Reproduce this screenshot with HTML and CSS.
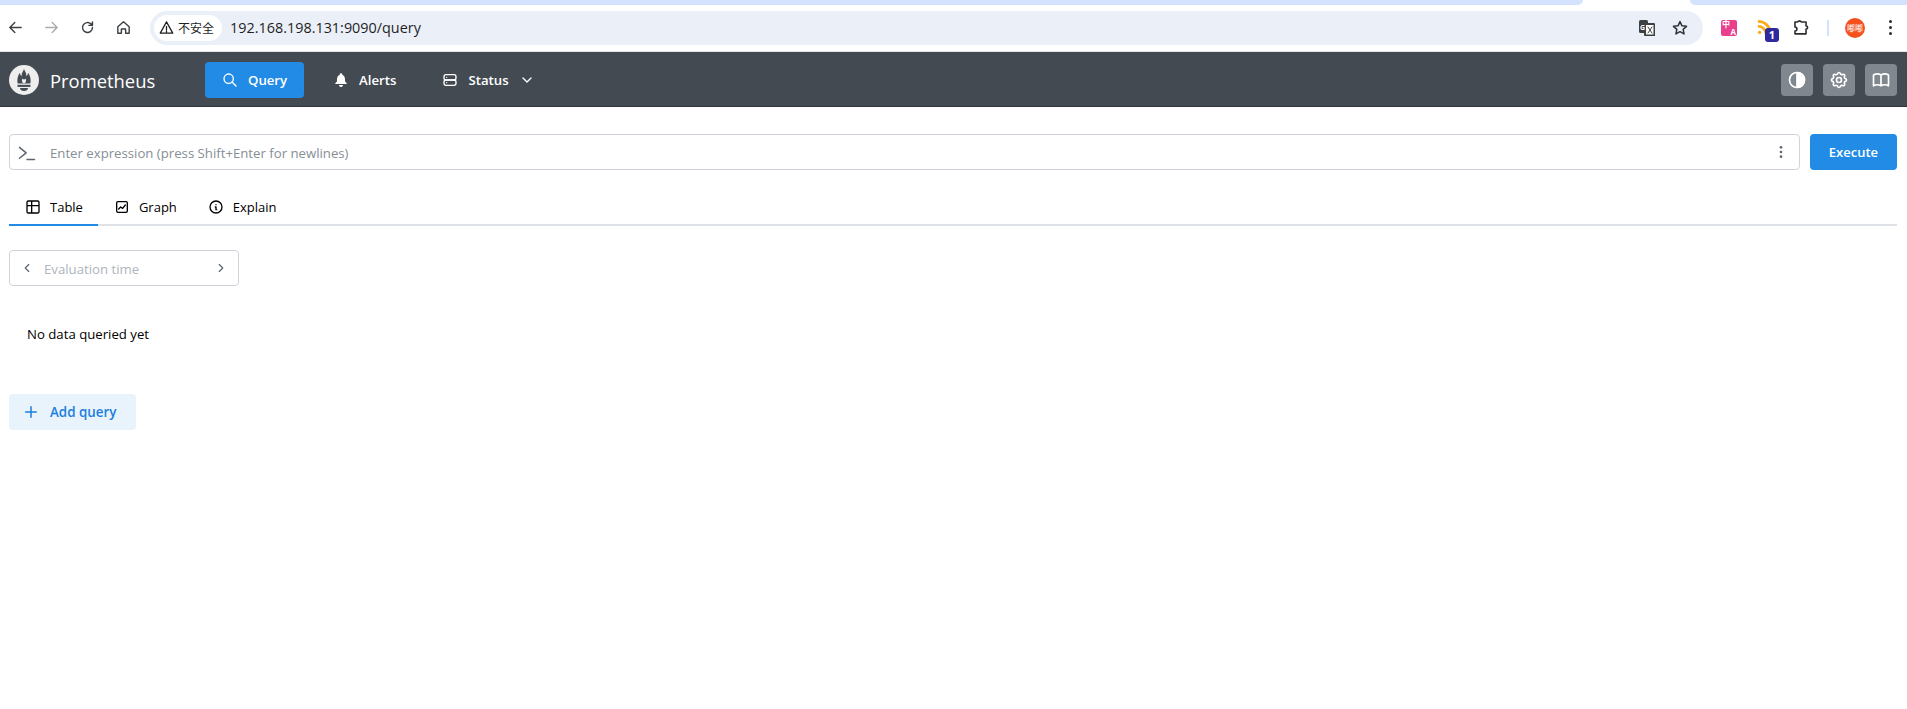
FILE: index.html
```html
<!DOCTYPE html>
<html lang="en">
<head>
    <meta charset="UTF-8">
    <meta name="viewport" content="width=device-width, initial-scale=1.0">
    <title>Prometheus Time Series Collection and Processing Server</title>
    <link rel="stylesheet" href="styles.css">
</head>
<body>
    <!-- browser chrome -->
    <div class="tab-strip">
        <div class="tab-strip-left"></div>
        <div class="tab-strip-gap"></div>
        <div class="tab-strip-right"></div>
    </div>
    <div class="toolbar">
        <div class="nav-buttons">
            <svg class="nav-icon" viewBox="0 0 24 24"><path d="M20 12H5M11 5l-7 7 7 7"/></svg>
            <svg class="nav-icon nav-disabled" viewBox="0 0 24 24"><path d="M4 12h15M13 5l7 7-7 7"/></svg>
            <svg class="nav-icon" viewBox="0 0 24 24"><path d="M19 12a7 7 0 1 1-2.2-5.1L19 9M19 4v5h-5"/></svg>
            <svg class="nav-icon" viewBox="0 0 24 24"><path d="M4 11l8-7 8 7v9h-5v-6H9v6H4z"/></svg>
        </div>
        <div class="address-bar">
            <div class="security-chip">
                <svg class="warn-icon" viewBox="0 0 24 24"><path d="M12 3L2 21h20zM12 10v6M12 17.5v1.5"/></svg>
                <span>不安全</span>
            </div>
            <span class="url">192.168.198.131:9090/query</span>
            <svg class="translate-icon" viewBox="0 0 16 16">
                <rect x="0" y="0" width="9" height="13" rx="1.5" fill="#3c4043"/>
                <rect x="6" y="4" width="9.500" height="11.500" rx="1" fill="#fff" stroke="#3c4043"/>
                <text x="1" y="9.500" class="translate-g">G</text>
                <path d="M9 7l4 6M13 7l-4 6" stroke="#3c4043" stroke-width="1" fill="none"/>
            </svg>
            <svg class="star-icon" viewBox="0 0 24 24"><path d="M12 3.500l2.600 5.600 6.100.7-4.500 4.100 1.200 6-5.400-3-5.400 3 1.200-6-4.500-4.100 6.100-.7z"/></svg>
        </div>
        <div class="extensions">
            <div class="ext-translate"><span class="ext-translate-a">中</span><span class="ext-translate-b">A</span></div>
            <div class="ext-rss">
                <svg class="rss-icon" viewBox="0 0 16 16"><path d="M1 1.500a13.500 13.500 0 0 1 13.500 13.500M1 6.500A8.500 8.500 0 0 1 9.500 15"/><circle cx="2.800" cy="13.200" r="1.800"/></svg>
                <span class="rss-badge">1</span>
            </div>
            <svg class="puzzle-icon" viewBox="0 0 24 24"><path d="M5 5h3.500a2.500 2.500 0 0 1 4.500 0H19v5a2 2 0 0 1 0 4v6H5v-3.500a2.500 2.500 0 0 0 0-5z"/></svg>
            <div class="toolbar-sep"></div>
            <div class="avatar">嘟嘟</div>
            <div class="kebab"><i></i><i></i><i></i></div>
        </div>
    </div>

    <!-- prometheus header -->
    <header class="app-header">
        <div class="brand">
            <svg class="logo" viewBox="0 0 30 30">
                <circle cx="15" cy="15" r="15" fill="#eeeeee"/>
                <path fill="#434a52" d="M15 4c.8 2.600 2.600 4 2.400 7.200 1-.6 1.500-1.800 1.600-3.400 2 2.500 3.200 6 2.400 10.700H8.600C7.800 13.800 9 10.300 11 7.800c.1 1.600.6 2.800 1.600 3.400C12.400 8 14.200 6.600 15 4z"/>
                <path fill="#eeeeee" d="M15 18.500c-2-.8-2.700-2.800-1.500-5 .4.800.9 1.100 1.500 1.100s1.100-.3 1.500-1.100c1.200 2.200.5 4.200-1.500 5z"/>
                <rect x="8.500" y="19.800" width="13" height="2.100" fill="#434a52"/>
                <path fill="#434a52" d="M11 23h8c0 1.800-1.800 3-4 3s-4-1.200-4-3z"/>
            </svg>
            <span class="brand-name">Prometheus</span>
        </div>
        <nav class="main-nav">
            <a class="nav-link active">
                <svg class="icon-16" viewBox="0 0 24 24"><circle cx="10" cy="10" r="7"/><path d="M21 21l-6-6"/></svg>
                Query
            </a>
            <a class="nav-link">
                <svg class="icon-16 filled" viewBox="0 0 24 24"><path d="M12 2a2 2 0 0 1 2 2 7 7 0 0 1 4 6v3a4 4 0 0 0 2 3 1 1 0 0 1-1 2H5a1 1 0 0 1-1-2 4 4 0 0 0 2-3v-3a7 7 0 0 1 4-6 2 2 0 0 1 2-2zM9 19.500h6a3 3 0 0 1-6 0z"/></svg>
                Alerts
            </a>
            <a class="nav-link">
                <svg class="icon-16" viewBox="0 0 24 24"><rect x="3" y="4" width="18" height="8" rx="3"/><rect x="3" y="12" width="18" height="8" rx="3"/><path d="M7 8v.01M7 16v.01"/></svg>
                Status
                <svg class="icon-16" viewBox="0 0 24 24"><path d="M6 9l6 6 6-6"/></svg>
            </a>
        </nav>
        <div class="header-actions">
            <button class="action-btn">
                <svg class="icon-20" viewBox="0 0 24 24"><circle cx="12" cy="12" r="9"/><path class="half" d="M12 3a9 9 0 0 1 0 18z"/></svg>
            </button>
            <button class="action-btn">
                <svg class="icon-20" viewBox="0 0 24 24"><path d="M10.325 4.317c.426-1.756 2.924-1.756 3.350 0a1.724 1.724 0 0 0 2.573 1.066c1.543-.94 3.310.826 2.370 2.370a1.724 1.724 0 0 0 1.065 2.572c1.756.426 1.756 2.924 0 3.350a1.724 1.724 0 0 0-1.066 2.573c.94 1.543-.826 3.310-2.370 2.370a1.724 1.724 0 0 0-2.572 1.065c-.426 1.756-2.924 1.756-3.350 0a1.724 1.724 0 0 0-2.573-1.066c-1.543.94-3.310-.826-2.370-2.370a1.724 1.724 0 0 0-1.065-2.572c-1.756-.426-1.756-2.924 0-3.350a1.724 1.724 0 0 0 1.066-2.573c-.94-1.543.826-3.310 2.370-2.370 1 .608 2.296.07 2.572-1.065z"/><circle cx="12" cy="12" r="3"/></svg>
            </button>
            <button class="action-btn">
                <svg class="icon-20" viewBox="0 0 24 24"><path d="M3 19a9 9 0 0 1 9 0 9 9 0 0 1 9 0M3 6a9 9 0 0 1 9 0 9 9 0 0 1 9 0M3 6v13M12 6v13M21 6v13"/></svg>
            </button>
        </div>
    </header>

    <main class="page">
        <div class="expression-row">
            <div class="expression-input">
                <svg class="terminal-icon" viewBox="0 0 24 24"><path d="M3 6.500l8 6.500-8 6.500M12 21h9"/></svg>
                <span class="placeholder">Enter expression (press Shift+Enter for newlines)</span>
                <svg class="menu-icon" viewBox="0 0 24 24"><circle cx="12" cy="5" r="2"/><circle cx="12" cy="12" r="2"/><circle cx="12" cy="19" r="2"/></svg>
            </div>
            <button class="execute-btn">Execute</button>
        </div>

        <div class="tabs">
            <div class="tab active">
                <svg class="icon-16" viewBox="0 0 24 24"><path d="M3 5a2 2 0 0 1 2-2h14a2 2 0 0 1 2 2v14a2 2 0 0 1-2 2H5a2 2 0 0 1-2-2zM3 10h18M10 3v18"/></svg>
                Table
            </div>
            <div class="tab">
                <svg class="icon-16" viewBox="0 0 24 24"><rect x="4" y="4" width="16" height="16" rx="2"/><path d="M7 15l3-3 3 2 4-5"/></svg>
                Graph
            </div>
            <div class="tab">
                <svg class="icon-16" viewBox="0 0 24 24"><circle cx="12" cy="12" r="9"/><path d="M12 8.500v.01M11 12h1v4h1"/></svg>
                Explain
            </div>
        </div>

        <div class="eval-time">
            <svg class="icon-14" viewBox="0 0 24 24"><path d="M15 6l-6 6 6 6"/></svg>
            <span class="eval-label">Evaluation time</span>
            <svg class="icon-14" viewBox="0 0 24 24"><path d="M9 6l6 6-6 6"/></svg>
        </div>

        <p class="no-data">No data queried yet</p>

        <button class="add-query">
            <svg class="icon-18" viewBox="0 0 24 24"><path d="M12 5v14M5 12h14"/></svg>
            Add query
        </button>
    </main>
</body>
</html>
```

FILE: styles.css
```css
* {
    box-sizing: border-box;
}

body {
    margin: 0;
    font-family: 'Open Sans', 'Noto Sans CJK SC', sans-serif;
    font-size: 13px;
    color: #000;
    background-color: #fff;
}

svg {
    fill: none;
    stroke: currentColor;
    stroke-width: 2;
    stroke-linecap: round;
    stroke-linejoin: round;
    flex-shrink: 0;
}

button {
    font-family: inherit;
    border: none;
    cursor: pointer;
}

.icon-14 { width: 14px; height: 14px; }
.icon-16 { width: 16px; height: 16px; }
.icon-18 { width: 18px; height: 18px; }
.icon-20 { width: 20px; height: 20px; }

.filled {
    fill: currentColor;
    stroke: none;
}

/* browser chrome */
.tab-strip {
    display: flex;
    height: 5px;
    background-color: #fff;
}

.tab-strip-left {
    width: 1583px;
    background-color: #d3e3fd;
    border-bottom-right-radius: 8px;
}

.tab-strip-gap {
    width: 107px;
}

.tab-strip-right {
    flex: 1;
    background-color: #d3e3fd;
    border-bottom-left-radius: 8px;
}

.toolbar {
    display: flex;
    align-items: center;
    height: 47px;
    padding-bottom: 1px;
    background-color: #fff;
    border-bottom: 1px solid #e3e5e8;
}

.nav-buttons {
    display: flex;
    gap: 19px;
    width: 150px;
    padding-left: 7px;
    color: #3c4043;
}

.nav-icon {
    width: 17px;
    height: 17px;
}

.nav-disabled {
    color: #a9abad;
}

.address-bar {
    display: flex;
    align-items: center;
    width: 1553px;
    height: 34px;
    padding: 0 14px 0 4px;
    border-radius: 17px;
    background-color: #ebeff8;
}

.security-chip {
    display: flex;
    align-items: center;
    gap: 4px;
    height: 26px;
    padding: 0 8px 0 5px;
    border-radius: 13px;
    background-color: #fff;
    font-size: 12px;
    color: #1f1f1f;
}

.warn-icon {
    width: 15px;
    height: 15px;
}

.url {
    flex: 1;
    margin-left: 8px;
    font-size: 14.4px;
    color: #1f1f1f;
}

.translate-icon {
    width: 16px;
    height: 16px;
    margin-right: 16px;
    stroke: none;
}

.translate-g {
    fill: #fff;
    font-size: 7px;
    font-weight: 700;
}

.star-icon {
    width: 18px;
    height: 18px;
    color: #2f3134;
}

.extensions {
    display: flex;
    align-items: center;
    flex: 1;
    padding-left: 18px;
}

.ext-translate {
    display: flex;
    flex-wrap: wrap;
    align-content: center;
    width: 16px;
    height: 16px;
    padding: 0 1px;
    border-radius: 2px;
    background-color: #ea3f8d;
    color: #fff;
    font-size: 8px;
    font-weight: 700;
    line-height: 8px;
}

.ext-translate-a {
    width: 14px;
    text-align: left;
}

.ext-translate-b {
    width: 14px;
    text-align: right;
}

.ext-rss {
    position: relative;
    width: 22px;
    height: 22px;
    margin-top: 6px;
    margin-left: 20px;
}

.rss-icon {
    display: block;
    width: 15px;
    height: 15px;
    color: #f9ab1f;
    stroke-width: 3;
    stroke-linecap: butt;
}

.rss-icon circle {
    fill: currentColor;
    stroke: none;
}

.rss-badge {
    position: absolute;
    right: 0;
    bottom: 0;
    width: 14px;
    height: 14px;
    border-radius: 3px;
    background-color: #2f2a9c;
    color: #fff;
    font-size: 11px;
    font-weight: 700;
    line-height: 14px;
    text-align: center;
}

.puzzle-icon {
    width: 19px;
    height: 19px;
    margin-left: 12px;
    color: #2b2d30;
}

.toolbar-sep {
    width: 2px;
    height: 16px;
    margin-left: 17px;
    background-color: #d3e3fd;
}

.avatar {
    width: 20px;
    height: 20px;
    margin-left: 16px;
    border-radius: 50%;
    background-color: #f4511e;
    color: #fff;
    font-size: 8px;
    line-height: 20px;
    text-align: center;
}

.kebab {
    display: flex;
    flex-direction: column;
    gap: 3px;
    margin-left: 24px;
}

.kebab i {
    width: 3px;
    height: 3px;
    border-radius: 50%;
    background-color: #2b2d30;
}

/* app header */
.app-header {
    display: flex;
    align-items: center;
    height: 55px;
    padding: 2px 10px 0 9px;
    background-color: #434a52;
    border-bottom: 1px solid #2f353b;
    color: #fff;
}

.brand {
    display: flex;
    align-items: center;
    gap: 11px;
    width: 196px;
}

.logo {
    width: 30px;
    height: 30px;
    stroke: none;
}

.brand-name {
    font-size: 18.4px;
    color: #fff;
}

.main-nav {
    display: flex;
    align-items: center;
    gap: 12px;
}

.nav-link {
    display: flex;
    align-items: center;
    gap: 10px;
    height: 36px;
    padding: 0 17px;
    border-radius: 4px;
    font-size: 13.2px;
    font-weight: 600;
    color: #fff;
}

.nav-link.active {
    background-color: #228be6;
}

.header-actions {
    display: flex;
    gap: 10px;
    margin-left: auto;
}

.action-btn {
    display: flex;
    align-items: center;
    justify-content: center;
    width: 32px;
    height: 32px;
    padding: 0;
    border-radius: 4px;
    background-color: #80878f;
    color: #fff;
}

.half {
    fill: currentColor;
}

/* query page */
.page {
    padding: 27px 10px 0 9px;
}

.expression-row {
    display: flex;
    gap: 10px;
}

.expression-input {
    display: flex;
    align-items: center;
    flex: 1;
    height: 36px;
    padding: 0 10px 0 7px;
    border: 1px solid #ced4da;
    border-radius: 4px;
}

.terminal-icon {
    width: 20px;
    height: 20px;
    color: #5c6670;
    stroke-width: 1.800;
}

.placeholder {
    flex: 1;
    padding-top: 2px;
    margin-left: 13px;
    font-size: 13.2px;
    color: #868e96;
}

.menu-icon {
    width: 16px;
    height: 16px;
    fill: #5c6670;
    stroke: none;
}

.execute-btn {
    width: 87px;
    height: 36px;
    border-radius: 4px;
    background-color: #228be6;
    color: #fff;
    font-size: 13px;
    font-weight: 600;
}

.tabs {
    display: flex;
    margin-top: 18px;
    border-bottom: 2px solid #dee2e6;
}

.tab {
    display: flex;
    align-items: center;
    gap: 9px;
    height: 38px;
    margin-bottom: -2px;
    padding: 2px 15px 0 16px;
    border-bottom: 2px solid transparent;
    font-size: 13px;
}

.tab.active {
    border-bottom-color: #228be6;
}

.eval-time {
    display: flex;
    align-items: center;
    width: 230px;
    height: 36px;
    margin-top: 24px;
    padding: 0 10px;
    border: 1px solid #ced4da;
    border-radius: 4px;
    color: #5c6670;
}

.eval-label {
    flex: 1;
    margin-left: 10px;
    padding-top: 1px;
    color: #adb5bd;
    font-size: 13.2px;
}

.no-data {
    margin: 38px 0 0 18px;
    font-size: 13.2px;
    line-height: 20px;
}

.add-query {
    display: flex;
    align-items: center;
    gap: 10px;
    height: 36px;
    margin-top: 50px;
    padding: 0 19px 0 13px;
    border-radius: 4px;
    background-color: #e8f3fc;
    color: #1b7fdc;
    font-size: 13.4px;
    font-weight: 600;
}
```
